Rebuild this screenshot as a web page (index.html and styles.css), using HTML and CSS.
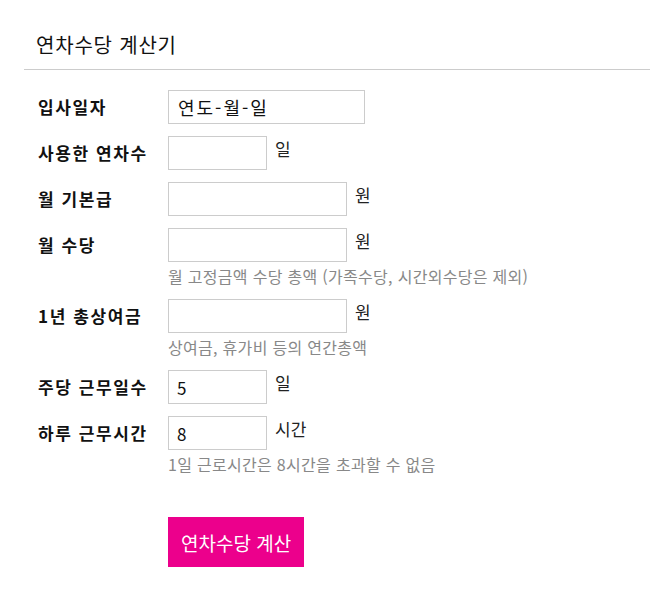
FILE: index.html
```html
<!DOCTYPE html>
<html lang="ko">
<head>
    <meta charset="UTF-8">
    <meta name="viewport" content="width=device-width, initial-scale=1.0">
    <title>연차수당 계산기</title>
    <link rel="stylesheet" href="styles.css">
</head>
<body>
    <div class="calc">
        <h2 class="calc-title">연차수당 계산기</h2>

        <form class="calc-form" onsubmit="return false;">
            <div class="row">
                <label class="row-label" for="joinDate">입사일자</label>
                <div class="row-field">
                    <div class="field-line">
                        <input type="text" id="joinDate" class="inp inp-date" value="연도-월-일">
                    </div>
                </div>
            </div>

            <div class="row">
                <label class="row-label" for="usedDays">사용한 연차수</label>
                <div class="row-field">
                    <div class="field-line">
                        <input type="text" id="usedDays" class="inp inp-short">
                        <span class="unit">일</span>
                    </div>
                </div>
            </div>

            <div class="row">
                <label class="row-label" for="basePay">월 기본급</label>
                <div class="row-field">
                    <div class="field-line">
                        <input type="text" id="basePay" class="inp inp-mid">
                        <span class="unit">원</span>
                    </div>
                </div>
            </div>

            <div class="row">
                <label class="row-label" for="allowance">월 수당</label>
                <div class="row-field">
                    <div class="field-line">
                        <input type="text" id="allowance" class="inp inp-mid">
                        <span class="unit">원</span>
                    </div>
                    <p class="hint">월 고정금액 수당 총액 (가족수당, 시간외수당은 제외)</p>
                </div>
            </div>

            <div class="row">
                <label class="row-label" for="bonus">1년 총상여금</label>
                <div class="row-field">
                    <div class="field-line">
                        <input type="text" id="bonus" class="inp inp-mid">
                        <span class="unit">원</span>
                    </div>
                    <p class="hint">상여금, 휴가비 등의 연간총액</p>
                </div>
            </div>

            <div class="row">
                <label class="row-label" for="workDays">주당 근무일수</label>
                <div class="row-field">
                    <div class="field-line">
                        <input type="text" id="workDays" class="inp inp-short" value="5">
                        <span class="unit">일</span>
                    </div>
                </div>
            </div>

            <div class="row">
                <label class="row-label" for="workHours">하루 근무시간</label>
                <div class="row-field">
                    <div class="field-line">
                        <input type="text" id="workHours" class="inp inp-short" value="8">
                        <span class="unit">시간</span>
                    </div>
                    <p class="hint">1일 근로시간은 8시간을 초과할 수 없음</p>
                </div>
            </div>

            <div class="actions">
                <button type="button" class="btn">연차수당 계산</button>
            </div>
        </form>
    </div>
</body>
</html>
```

FILE: styles.css
```css
body {
    margin: 0;
    background: #fff;
    font-family: "Noto Sans CJK KR", "Noto Sans", sans-serif;
    color: #111;
}
.calc {
    padding: 30px 0 0 24px;
}
.calc-title {
    margin: 0;
    padding: 0 12px 9px;
    font-size: 20px;
    font-weight: normal;
    line-height: 30px;
    letter-spacing: 0.8px;
    border-bottom: 1px solid #ccc;
}
.calc-form {
    margin-top: 20px;
    padding-left: 14px;
}
.row {
    display: flex;
    align-items: flex-start;
    margin-bottom: 12px;
}
.row-label {
    width: 130px;
    flex-shrink: 0;
    font-size: 17px;
    font-weight: bold;
    line-height: 34px;
    letter-spacing: 1.6px;
}
.field-line {
    display: flex;
    align-items: flex-start;
}
.inp {
    box-sizing: border-box;
    height: 34px;
    margin: 0;
    padding: 0 8px;
    border: 1px solid #ccc;
    border-radius: 0;
    font-family: inherit;
    font-size: 17px;
    color: #111;
    outline: none;
}
.inp-date { width: 197px; padding-left: 9px; font-size: 18px; letter-spacing: 2px; }
.inp-short { width: 99px; }
.inp-mid { width: 179px; }
.unit {
    margin-left: 8px;
    font-size: 17px;
    line-height: 26px;
    color: #222;
}
.hint {
    margin: 4px 0 0;
    font-size: 16px;
    line-height: 21px;
    color: #888;
    letter-spacing: 0.3px;
}
.actions {
    margin-top: 42px;
    padding-left: 130px;
}
.btn {
    height: 50px;
    padding: 0 13px;
    border: 0;
    border-radius: 0;
    background-color: #ec008c;
    color: white;
    font-family: inherit;
    font-size: 19px;
    cursor: pointer;
}
```
